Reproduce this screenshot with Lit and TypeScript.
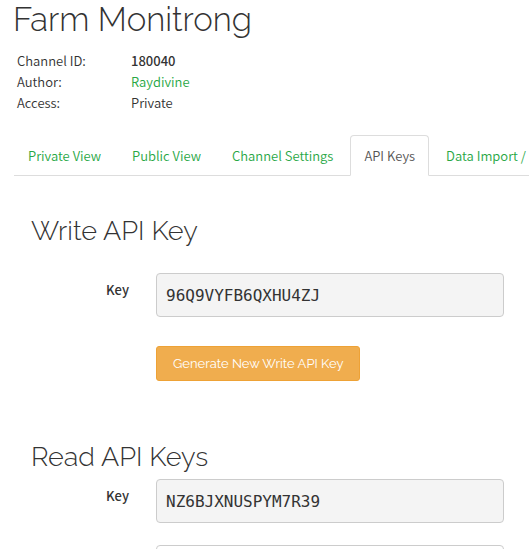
import { LitElement, html, css } from "lit";
import { customElement } from "lit/decorators.js";

const TABS = ["Private View", "Public View", "Channel Settings", "API Keys", "Data Import /"];
const ACTIVE_TAB = "API Keys";

@customElement("app-root")
export class AppRoot extends LitElement {
  static styles = css`
    :host {
      display: block;
      overflow: hidden;
      background: #fff;
      color: #333;
      font: 350 13px/21px "Noto Sans CJK SC", "Noto Sans", sans-serif;
    }
    a {
      color: #28a745;
      text-decoration: none;
    }
    h1, h2 {
      margin: 0;
      font-family: Raleway, Lato, sans-serif;
      font-weight: 300;
    }
    h1 {
      padding: 2px 13px 0;
      font-size: 33px;
      line-height: 36px;
    }
    h2 {
      font-size: 27px;
      line-height: 30px;
    }
    .details {
      display: grid;
      grid-template-columns: 114px 1fr;
      margin: 12px 17px 0;
    }
    .details dd {
      margin: 0;
    }
    .details .strong {
      font-weight: 500;
    }
    .tabs {
      display: flex;
      gap: 3px;
      margin: 22px 0 0 14px;
      padding: 0;
      list-style: none;
      white-space: nowrap;
      border-bottom: 1px solid #ddd;
    }
    .tab {
      display: block;
      margin-bottom: -1px;
      padding: 9px 13px;
      border: 1px solid transparent;
      border-radius: 4px 4px 0 0;
    }
    .active {
      color: #555;
      background: #fff;
      border-color: #ddd;
      border-bottom-color: #fff;
    }
    .panel {
      padding: 40px 25px 0 31px;
    }
    .row {
      display: grid;
      grid-template-columns: 98px 1fr;
      column-gap: 27px;
    }
    .write {
      margin: 27px 0 61px;
      row-gap: 29px;
    }
    .read {
      margin-top: 7px;
      row-gap: 22px;
    }
    label {
      padding-top: 6px;
      text-align: right;
      font-weight: 500;
    }
    input {
      box-sizing: border-box;
      width: 100%;
      min-width: 0;
      height: 44px;
      margin: 0;
      padding: 0 9px;
      border: 1px solid #ccc;
      border-radius: 4px;
      background: #fff;
      color: #333;
      font: 16px "DejaVu Sans Mono", monospace;
    }
    input:read-only {
      background: #f4f4f4;
    }
    button {
      grid-column: 2;
      justify-self: start;
      height: 35px;
      padding: 0 16px;
      border: 1px solid #eea236;
      border-radius: 3px;
      background: #f0ad4e;
      color: #fff;
      font: 13px Raleway, Lato, sans-serif;
    }
  `;

  render() {
    return html`
      <h1>Farm Monitrong</h1>
      <dl class="details">
        <dt>Channel ID:</dt>
        <dd class="strong">180040</dd>
        <dt>Author:</dt>
        <dd><a href="#author">Raydivine</a></dd>
        <dt>Access:</dt>
        <dd>Private</dd>
      </dl>
      <ul class="tabs">
        ${TABS.map(
          (name) => html`<li><a class="tab ${name === ACTIVE_TAB ? "active" : ""}" href="#tab">${name}</a></li>`
        )}
      </ul>
      <main class="panel">
        <h2>Write API Key</h2>
        <div class="row write">
          <label for="write-key">Key</label>
          <input id="write-key" readonly .value=${"96Q9VYFB6QXHU4ZJ"} />
          <button type="button">Generate New Write API Key</button>
        </div>
        <h2>Read API Keys</h2>
        <div class="row read">
          <label for="read-key">Key</label>
          <input id="read-key" readonly .value=${"NZ6BJXNUSPYM7R39"} />
          <span></span>
          <input aria-label="Note" />
        </div>
      </main>
    `;
  }
}
